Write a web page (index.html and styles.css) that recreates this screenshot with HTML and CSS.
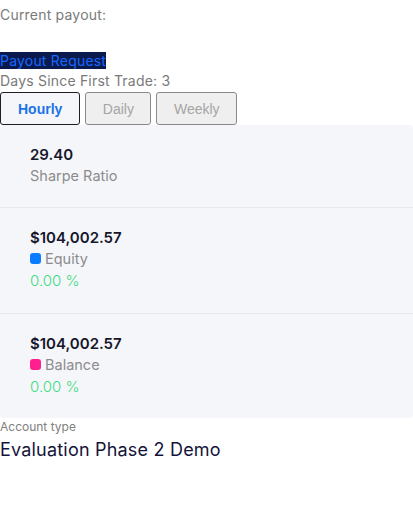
FILE: index.html
```html
<!DOCTYPE html>
<html lang="en">
<head>
    <meta charset="UTF-8">
    <meta name="viewport" content="width=device-width, initial-scale=1.0">
    <title>Account Overview</title>
    <link rel="stylesheet" href="styles.css">
</head>
<body>

    <!-- Payout info -->
    <div class="payout">
        <p class="payout-label">Current payout:</p>
        <p class="payout-request"><span class="payout-link">Payout Request</span></p>
        <p class="trade-days">Days Since First Trade: 3</p>
    </div>

    <!-- Period switcher -->
    <div class="periods">
        <button class="period active">Hourly</button>
        <button class="period" disabled>Daily</button>
        <button class="period" disabled>Weekly</button>
    </div>

    <!-- Stats card -->
    <div class="stats">
        <div class="stat-row first">
            <div class="stat-value">29.40</div>
            <div class="stat-name">Sharpe Ratio</div>
        </div>
        <div class="stat-row">
            <div class="stat-value">$104,002.57</div>
            <div class="stat-name"><span class="dot equity"></span>Equity</div>
            <div class="stat-change">0.00 %</div>
        </div>
        <div class="stat-row last">
            <div class="stat-value">$104,002.57</div>
            <div class="stat-name"><span class="dot balance"></span>Balance</div>
            <div class="stat-change">0.00 %</div>
        </div>
    </div>

    <!-- Account type -->
    <div class="account">
        <div class="account-label">Account type</div>
        <div class="account-name">Evaluation Phase 2 Demo</div>
    </div>

</body>
</html>
```

FILE: styles.css
```css
body {
    font-family: Inter, "Noto Sans", sans-serif;
    background-color: #ffffff;
    margin: 0;
    color: #1b1b2f;
}

p {
    margin: 0;
}

.payout-label {
    margin-top: 5px;
    font-size: 14px;
    line-height: 20px;
    letter-spacing: 0.2px;
    color: #7a7a7a;
}

.payout-request {
    margin-top: 27px;
    font-size: 14px;
    line-height: 18px;
    letter-spacing: 0.2px;
}

.payout-link {
    background-color: #0b1a4c;
    color: #1768ff;
}

.trade-days {
    font-size: 14px;
    line-height: 22px;
    letter-spacing: 0.2px;
    color: #7a7a7a;
}

/* Period buttons */
.periods {
    display: flex;
    gap: 5px;
}

.period {
    height: 33px;
    padding: 0 16.5px;
    font-family: "Liberation Sans", Arial, sans-serif;
    font-size: 14px;
    background-color: #efefef;
    border: 1px solid #8a8a8a;
    border-radius: 3px;
    color: #a5a5a5;
}

.period.active {
    background-color: #f5f6fa;
    border-color: #1e1e1e;
    color: #1a73e8;
    font-weight: bold;
    padding: 0 17px;
}

/* Stats card */
.stats {
    background-color: #f5f6fa;
    border-radius: 4px;
}

.stat-row {
    padding: 20px 30px 21px;
    border-bottom: 1px solid #e6e7ec;
}

.stat-row.last {
    border-bottom: none;
    padding-bottom: 20px;
}

.stat-value {
    font-size: 15px;
    line-height: 20px;
    font-weight: 600;
    color: #17172b;
}

.stat-name {
    display: flex;
    align-items: center;
    font-size: 14.5px;
    line-height: 21px;
    color: #8c8c8c;
}

.dot {
    width: 11px;
    height: 11px;
    border-radius: 3px;
    margin-right: 4px;
}

.dot.equity {
    background-color: #0a7cff;
}

.dot.balance {
    background-color: #ff1f8e;
}

.stat-change {
    padding-top: 1px;
    font-size: 15px;
    line-height: 22px;
    font-weight: 300;
    color: #3ddc84;
}

/* Account type */
.account-label {
    margin-top: 1px;
    font-size: 12px;
    line-height: 16px;
    color: #808080;
}

.account-name {
    margin-top: 3px;
    font-size: 18px;
    line-height: 24px;
    letter-spacing: 0.2px;
    color: #14143a;
}
```
